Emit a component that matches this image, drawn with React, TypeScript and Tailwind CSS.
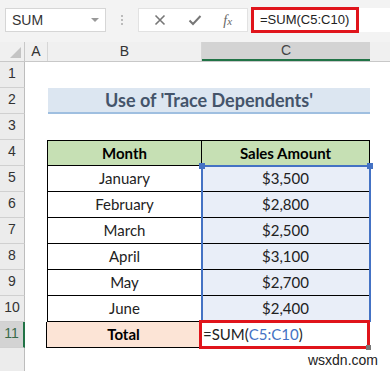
import React from "react";

const rows = [
  { n: 5, month: "January", amount: "$3,500" },
  { n: 6, month: "February", amount: "$2,800" },
  { n: 7, month: "March", amount: "$2,500" },
  { n: 8, month: "April", amount: "$3,100" },
  { n: 9, month: "May", amount: "$2,700" },
  { n: 10, month: "June", amount: "$2,400" },
];

const cellFont = { fontFamily: "Lato, 'Open Sans', sans-serif" };

const RowHead: React.FC<{ n?: number; active?: boolean }> = ({ n, active }) => (
  <div
    className={`w-[25px] h-full shrink-0 flex items-end justify-center pb-[3px] text-[14px] border-b border-[#d0d0d0] ${
      active
        ? "bg-[#d3d3d3] text-[#3a6a4a] border-r-2 border-r-[#217346]"
        : "bg-[#ececec] text-[#333] border-r border-r-[#bdbdbd]"
    }`}
    style={{ fontFamily: "'Liberation Sans', Arial, sans-serif" }}
  >
    {n}
  </div>
);

const App: React.FC = () => {
  return (
    <div className="w-[390px] h-[371px] overflow-hidden bg-white relative" style={cellFont}>
      {/* Ribbon / formula bar */}
      <div className="h-[42px] bg-[#f3f3f3] flex items-start pt-[8px] pl-[5px]">
        <div
          className="w-[101px] h-[24px] bg-white border border-[#d6d6d6] flex items-center justify-between pl-[6px] pr-[6px] text-[14px] text-[#333]"
          style={{ fontFamily: "'Liberation Sans', Arial, sans-serif" }}
        >
          <span>SUM</span>
          <span className="w-0 h-0 border-l-[4px] border-r-[4px] border-t-[4px] border-l-transparent border-r-transparent border-t-[#999]" />
        </div>
        <div className="w-[32px] h-[24px] flex flex-col items-center justify-center gap-[2px]">
          <span className="w-[2px] h-[2px] bg-[#bbb]" />
          <span className="w-[2px] h-[2px] bg-[#bbb]" />
          <span className="w-[2px] h-[2px] bg-[#bbb]" />
        </div>
        <div className="w-[110px] h-[24px] bg-white border border-[#e2e2e2] flex items-center justify-around px-[4px]">
          <svg width="12" height="12" viewBox="0 0 12 12">
            <path d="M1.5 1.5 L10.5 10.5 M10.5 1.5 L1.5 10.5" stroke="#777" strokeWidth="1.6" />
          </svg>
          <svg width="14" height="12" viewBox="0 0 14 12">
            <path d="M1.5 6.5 L5 10 L12.5 2" stroke="#777" strokeWidth="2" fill="none" />
          </svg>
          <span className="text-[14px] italic text-[#666]" style={{ fontFamily: "'Liberation Serif', serif" }}>
            f<span className="text-[11px]">x</span>
          </span>
        </div>
        <div className="ml-[3px] flex-1 h-[24px] bg-white relative">
          <div
            className="absolute left-0 top-[-1px] w-[108px] h-[26px] border-[3px] border-[#e0141b] flex items-center pl-[6px] text-[13px] text-[#222] whitespace-nowrap"
            style={{ fontFamily: "'Liberation Sans', Arial, sans-serif" }}
          >
            =SUM(C5:C10)
          </div>
        </div>
      </div>

      {/* Column headers */}
      <div
        className="h-[20px] flex bg-[#f0f0f0] border-b border-[#c8c8c8] text-[14px] text-[#333]"
        style={{ fontFamily: "'Liberation Sans', Arial, sans-serif" }}
      >
        <div className="w-[25px] shrink-0 border-r border-[#c8c8c8] flex items-end justify-end pr-[3px] pb-[3px]">
          <span className="w-0 h-0" style={{ borderBottom: "11px solid #c4c4c4", borderLeft: "11px solid transparent" }} />
        </div>
        <div className="w-[23px] shrink-0 border-r border-[#d6d6d6] flex items-center justify-center">A</div>
        <div className="w-[154px] shrink-0 border-r border-[#d6d6d6] flex items-center justify-center">B</div>
        <div className="w-[168px] shrink-0 bg-[#d3d3d3] border-b-2 border-[#217346] flex items-center justify-center text-[#444]">C</div>
        <div className="flex-1" />
      </div>

      {/* Row 1 */}
      <div className="h-[26px] flex">
        <RowHead n={1} />
      </div>
      {/* Row 2 - title */}
      <div className="h-[26px] flex">
        <RowHead n={2} />
        <div className="w-[23px] shrink-0" />
        <div className="w-[322px] shrink-0 bg-[#dce6f1] border-b-2 border-[#9fbfe0] flex items-center justify-center text-[18px] font-bold text-[#44546a]">
          Use of 'Trace Dependents'
        </div>
      </div>
      {/* Row 3 */}
      <div className="h-[26px] flex">
        <RowHead n={3} />
      </div>
      {/* Row 4 - header */}
      <div className="h-[26px] flex">
        <RowHead n={4} />
        <div className="w-[22px] shrink-0" />
        <div className="w-[155px] shrink-0 bg-[#c6e0b4] border border-black flex items-center justify-center text-[15px] font-bold text-black">
          Month
        </div>
        <div className="w-[168px] shrink-0 bg-[#c6e0b4] border-y border-r border-black flex items-center justify-center text-[15px] font-bold text-black relative">
          Sales Amount
        </div>
      </div>

      {/* Data rows */}
      <div className="relative">
        {rows.map((r) => (
          <div key={r.n} className="h-[26px] flex">
            <RowHead n={r.n} />
            <div className="w-[22px] shrink-0" />
            <div className="w-[155px] shrink-0 border-x border-b border-black flex items-center justify-center text-[15px] text-[#222]">
              {r.month}
            </div>
            <div className="w-[168px] shrink-0 bg-[#e9eef8] border-r border-b border-black flex items-center justify-center text-[15px] text-[#222]">
              {r.amount}
            </div>
          </div>
        ))}
        {/* selection outline */}
        <div className="absolute left-[201px] top-[-1px] w-[170px] h-[157px] border-2 border-[#4472c4] pointer-events-none">
          <span className="absolute -left-[4px] -top-[4px] w-[6px] h-[6px] bg-[#4472c4]" />
          <span className="absolute -right-[4px] -top-[4px] w-[6px] h-[6px] bg-[#4472c4]" />
        </div>
      </div>

      {/* Row 11 - total */}
      <div className="h-[26px] flex">
        <RowHead n={11} active />
        <div className="w-[21px] shrink-0" />
        <div className="w-[155px] shrink-0 bg-[#fce4d6] border-x border-b border-black flex items-center justify-center text-[15px] font-bold text-black">
          Total
        </div>
        <div className="w-[168px] shrink-0 border-r border-b border-black relative flex items-center text-[15px] text-[#222]">
          <div className="absolute -left-[2px] -top-[2px] -right-[2px] -bottom-[2px] border-[3px] border-[#e0141b] flex items-center pl-[1px]">
            =SUM(<span className="text-[#4472c4]">C5:C10</span>)
            <span className="absolute -right-[4px] -bottom-[4px] w-[5px] h-[5px] bg-[#777]" />
          </div>
        </div>
      </div>

      {/* Row 12 partial */}
      <div className="h-[30px] flex">
        <div className="w-[25px] h-full shrink-0 bg-[#ececec] border-r border-[#bdbdbd]" />
        <div className="flex-1 flex justify-end items-start pr-[12px] pt-[2px] text-[14px] text-[#222]" style={{ fontFamily: "'Liberation Sans', Arial, sans-serif" }}>
          wsxdn.com
        </div>
      </div>
    </div>
  );
};

export default App;
